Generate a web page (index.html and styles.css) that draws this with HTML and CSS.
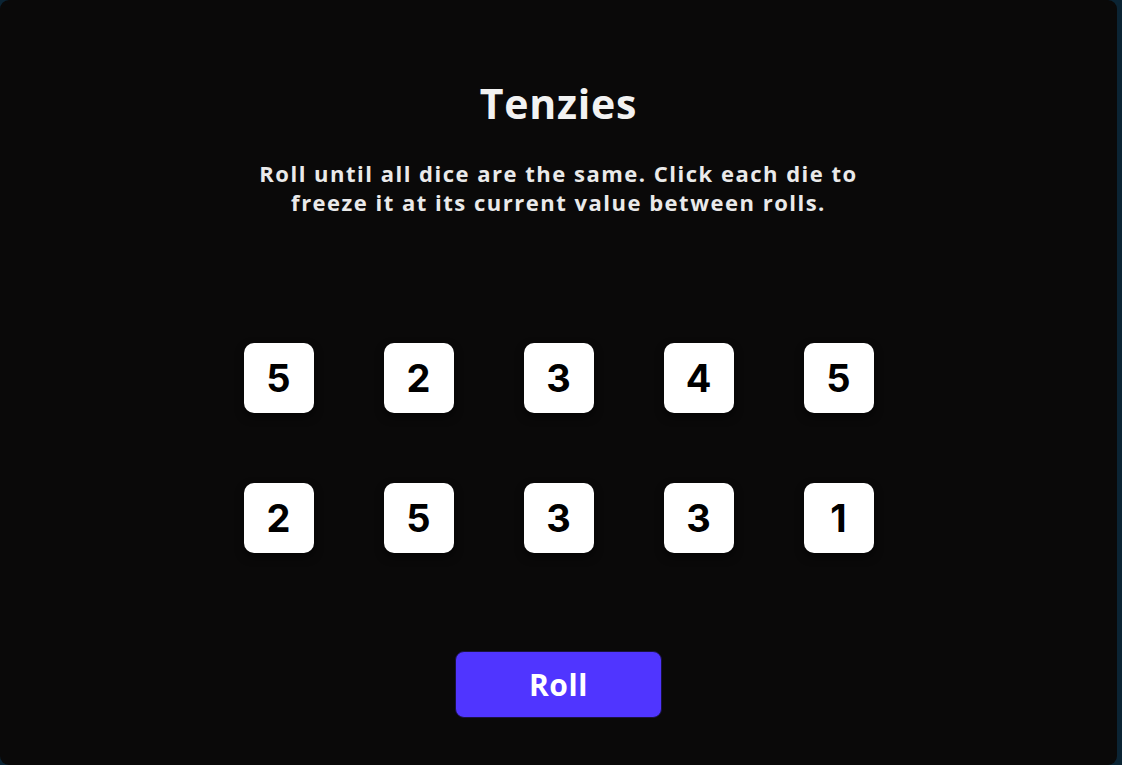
FILE: index.html
```html
<!DOCTYPE html>
<html lang="en">
<head>
<meta charset="utf-8">
<title>Tenzies</title>
<link rel="stylesheet" href="styles.css">
</head>
<body>
<main class="board">
  <h1 class="title">Tenzies</h1>
  <p class="instructions">Roll until all dice are the same. Click each die to freeze it at its current value between rolls.</p>
  <div class="dice">
    <button class="die">5</button>
    <button class="die">2</button>
    <button class="die">3</button>
    <button class="die">4</button>
    <button class="die">5</button>
    <button class="die">2</button>
    <button class="die">5</button>
    <button class="die">3</button>
    <button class="die">3</button>
    <button class="die">1</button>
  </div>
  <button class="roll">Roll</button>
</main>
</body>
</html>
```
FILE: styles.css
```css
* { box-sizing: border-box; }
html, body { height: 100%; }
body {
  margin: 0;
  background: #0b2434;
  font-family: "Open Sans", "Liberation Sans", sans-serif;
  overflow: hidden;
}
.board {
  width: 1117px;
  height: 765px;
  background: #0a0909;
  border-radius: 9px;
  display: flex;
  flex-direction: column;
  align-items: center;
  padding-top: 78px;
}
.title {
  margin: 0;
  color: #f2f2f2;
  font-size: 41px;
  font-weight: 700;
  line-height: 50px;
  letter-spacing: 0.8px;
}
.instructions {
  margin: 31px 0 0;
  width: 640px;
  text-align: center;
  color: #eaeaea;
  font-size: 22px;
  font-weight: 700;
  line-height: 29px;
  letter-spacing: 1.5px;
}
.dice {
  margin-top: 126px;
  display: grid;
  grid-template-columns: repeat(5, 70px);
  grid-auto-rows: 70px;
  gap: 70px;
}
.die {
  width: 70px;
  height: 70px;
  border: none;
  border-radius: 10px;
  background: #ffffff;
  color: #000;
  font-family: "Inter", "Liberation Sans", sans-serif;
  font-size: 38px;
  font-weight: 700;
  padding: 0;
  box-shadow: 0 4px 8px rgba(0, 0, 0, 0.6);
}
.roll {
  margin-top: 98px;
  width: 207px;
  height: 67px;
  background: #5035ff;
  color: #fff;
  border: 1px solid #1a1240;
  border-radius: 9px;
  font-family: "Open Sans", "Liberation Sans", sans-serif;
  font-size: 30px;
  font-weight: 700;
  letter-spacing: 0.6px;
  padding: 0;
}
```
